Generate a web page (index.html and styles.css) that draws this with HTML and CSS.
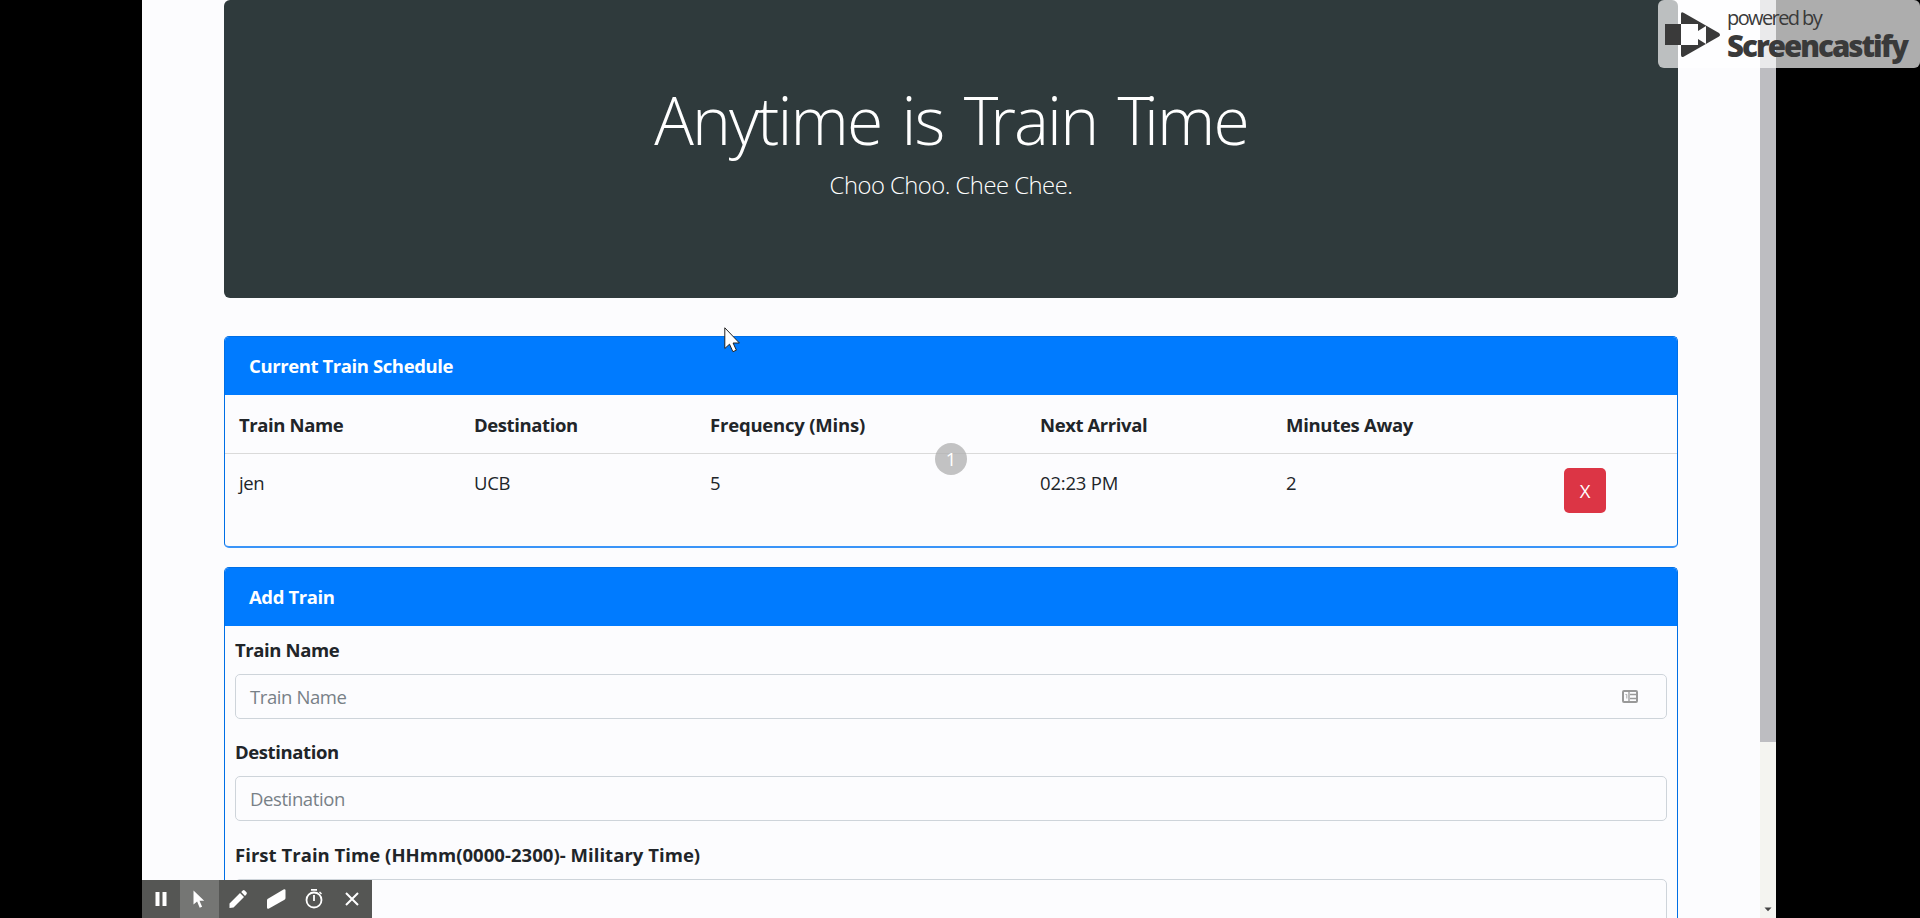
FILE: index.html
```
<!DOCTYPE html>
<html lang="en">
<head>
<meta charset="utf-8">
<title>Train Scheduler</title>
<link rel="stylesheet" href="styles.css">
</head>
<body>
<div class="screen">
  <main class="page">
    <header class="hero">
      <h1 class="hero-title">Anytime is <span class="kern">T</span>rain <span class="kern">T</span>ime</h1>
      <p class="hero-lead">Choo Choo. Chee Chee.</p>
    </header>
    <section class="card schedule">
      <h2 class="card-header">Current Train Schedule</h2>
      <div class="row row-head">
        <span>Train Name</span><span>Destination</span><span class="freq">Frequency (Mins)</span><span>Next Arrival</span><span class="mins">Minutes Away</span>
      </div>
      <div class="row row-body">
        <span>jen</span><span>UCB</span><span>5</span><span class="time">02:23 PM</span><span>2</span><span><button class="remove">X</button></span>
      </div>
    </section>
    <section class="card add">
      <h2 class="card-header">Add Train</h2>
      <form class="form">
        <div class="group">
          <label>Train Name</label>
          <div class="field"><span>Train Name</span>
            <svg class="autofill" width="16" height="13" viewBox="0 0 16 13"><rect x="1" y="1" width="14" height="11" rx="1" fill="none" stroke="#999" stroke-width="2"/><path d="M7 1v11M8 4.5h6M8 8.5h6" stroke="#999" stroke-width="1.3"/><path d="M3.500 4.500h1.300v4" stroke="#aaa" fill="none"/></svg>
          </div>
        </div>
        <div class="group">
          <label>Destination</label>
          <div class="field"><span>Destination</span></div>
        </div>
        <div class="group">
          <label class="long">First Train Time (HHmm(0000-2300)- Military Time)</label>
          <div class="field"></div>
        </div>
      </form>
    </section>
  </main>
  <div class="scrollbar"><div class="thumb"></div><svg class="down" width="8" height="5" viewBox="0 0 8 5"><path d="M.5.5h7L4 4.200z" fill="#444"/></svg></div>
</div>
<div class="counter">1</div>
<svg class="pointer" width="18" height="26" viewBox="0 0 18 26"><path d="M.8.8v20.700l4.700-4.300 3.400 7.500 3.500-1.500-3.300-7.200h6.300z" fill="#fff" stroke="#222" stroke-width="1"/></svg>
<div class="watermark">
  <svg width="56" height="46" viewBox="0 0 56 46"><path d="M0 12h16V33H0zM16 2q0-3 3-1L54 21q2 2 0 3.500L19 44.500q-3 1.500-3-1.500V33h17v-6l8 5V14l-8 5v-7H16z" fill="#3a3a3a"/></svg>
  <div class="brand"><span class="powered">powered by</span><span class="name">Screencastify</span></div>
</div>
<div class="toolbar">
  <span class="tool"><svg width="38" height="38"><path d="M13.500 12h4v14h-4zM20.500 12h4v14h-4z"/></svg></span>
  <span class="tool active"><svg width="38" height="38"><path d="M13.500 10.500v14l3.600-3 2.600 6.200 2.400-1-2.600-6h4.700z"/></svg></span>
  <span class="tool"><svg width="38" height="38"><path d="M10.500 28v-4.500L21 13l4 4-10.500 10.500zM22.200 12l1.500-1.500q1-.8 2 0l1.800 1.800q.8 1 0 2L26 16z"/></svg></span>
  <span class="tool"><svg width="38" height="38"><path d="M10.500 19L26.500 9.500q2-1 2 1v7.500q0 1-1 1.800L12 28.500q-2 1-2-1v-7q0-1 .5-1.500z"/></svg></span>
  <span class="tool"><svg width="38" height="38"><circle cx="19" cy="20" r="7.500" fill="none" stroke="#fff" stroke-width="1.800"/><path d="M16 9h6v1.800h-6zM18.100 15h1.800v6h-1.800zM24 12.500l1-1 2 2-1 1z"/></svg></span>
  <span class="tool"><svg width="38" height="38"><path d="M13 13l12 12M25 13L13 25" stroke="#fff" stroke-width="2"/></svg></span>
</div>
</body>
</html>
```
FILE: styles.css
```
* { box-sizing: border-box; }
body {
  margin: 0;
  height: 918px;
  overflow: hidden;
  background: #000;
  color: #212529;
  font: 18.500px/29px "Open Sans", "Noto Sans", sans-serif;
}
.screen {
  display: flex;
  width: 1634px;
  height: 918px;
  margin-left: 142px;
  background: #fcfcfe;
  overflow: hidden;
}
.page { width: 1618px; padding: 0 82px; }
.hero {
  height: 298px;
  padding-top: 79px;
  border-radius: 6px;
  background: #2f3a3c;
  color: #fff;
  text-align: center;
}
.hero-title { margin: 0; font-size: 66px; line-height: 80px; font-weight: 300; letter-spacing: -1.900px; word-spacing: 5px; }
.kern { letter-spacing: -8px; }
.hero-lead { margin: 11px 0 0; font-size: 23.800px; line-height: 30px; font-weight: 300; letter-spacing: -.5px; }
.card { border: 1px solid #006fe6; border-bottom: 2px solid #3a94f8; border-radius: 5px; overflow: hidden; }
.card-header {
  margin: -1px -1px 0;
  height: 59px;
  padding: 15px 25px;
  background: #007bff;
  color: #fff;
  font-size: 18.500px;
  line-height: 29px;
  font-weight: 700;
  letter-spacing: -.4px;
}
.schedule { height: 212px; margin-top: 38px; }
.row { display: grid; grid-template-columns: 235px 236px 330px 246px 278px 1fr; padding-left: 14px; }
.row-head { height: 59px; padding-top: 15px; border-bottom: 1px solid #dadada; font-weight: 700; letter-spacing: -.4px; }
.freq { letter-spacing: -.2px; }
.mins { letter-spacing: -.3px; }
.row-body { padding-top: 14px; letter-spacing: -.35px; }
.time { letter-spacing: -.2px; }
.remove {
  display: block;
  width: 42px;
  height: 45px;
  padding: 0;
  border: 0;
  border-radius: 5px;
  background: #dc3545;
  color: #fff;
  font: inherit;
}
.add { height: 400px; margin-top: 19px; }
.form { padding: 9px 10px; }
.group { height: 102.300px; }
label { display: block; height: 39px; font-weight: 700; letter-spacing: -.4px; }
.long { letter-spacing: .04px; }
.field {
  display: flex;
  align-items: center;
  justify-content: space-between;
  height: 44.500px;
  padding: 0 28px 0 14px;
  border: 1px solid #ced4da;
  border-radius: 5px;
  color: #788087;
  letter-spacing: -.4px;
}
.scrollbar { position: relative; width: 16px; background: #f4f4f0; }
.thumb { height: 742px; background: #bdbdc1; }
.down { position: absolute; left: 4px; bottom: 6px; }
.counter {
  position: absolute;
  left: 935px;
  top: 443px;
  width: 32px;
  height: 32px;
  border-radius: 50%;
  background: rgba(175, 175, 175, .75);
  color: #fff;
  text-align: center;
  line-height: 31px;
}
.pointer { position: absolute; left: 724px; top: 327px; }
.watermark {
  position: absolute;
  left: 1658px;
  top: 0;
  width: 262px;
  height: 68px;
  padding: 12px 0 0 7px;
  display: flex;
  gap: 6px;
  border-radius: 6px;
  background: rgba(255, 255, 255, .68);
  color: #3a3a3a;
}
.brand { display: flex; flex-direction: column; margin-top: -8px; white-space: nowrap; }
.powered { font: 20px/28px "Open Sans", sans-serif; letter-spacing: -1.600px; }
.name { font: 800 29.500px/28px "Open Sans", sans-serif; letter-spacing: -2px; }
.toolbar { position: absolute; left: 142px; top: 880px; width: 230px; height: 38px; display: flex; background: #555654; }
.tool { width: 38.300px; height: 38px; fill: #fff; }
.active { background: #757674; }
```
